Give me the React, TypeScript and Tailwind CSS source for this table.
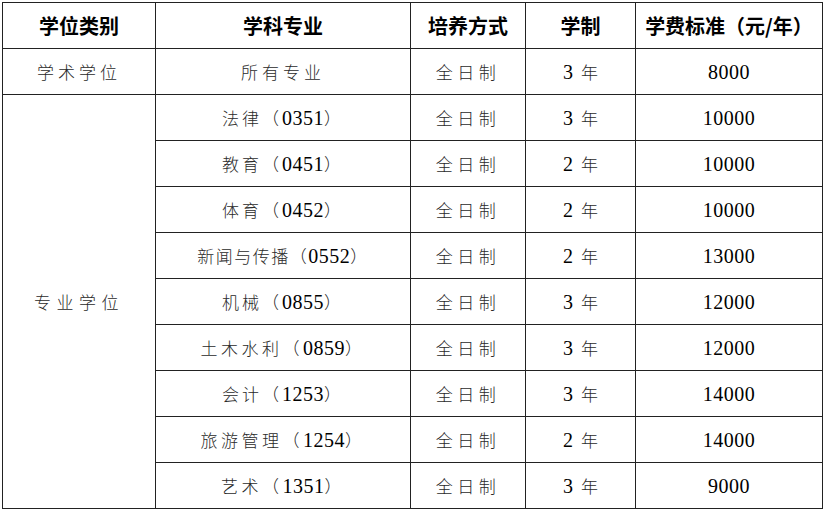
import React from "react";

type Row = { major: string; mode: string; years: string; fee: string; track?: string };

const ROWS: Row[] = [
  { major: "法律（0351）", mode: "全日制", years: "3 年", fee: "10000", track: "tracking-[3px]" },
  { major: "教育（0451）", mode: "全日制", years: "2 年", fee: "10000", track: "tracking-[3px]" },
  { major: "体育（0452）", mode: "全日制", years: "2 年", fee: "10000", track: "tracking-[3px]" },
  { major: "新闻与传播（0552）", mode: "全日制", years: "2 年", fee: "13000", track: "tracking-[1.5px]" },
  { major: "机械（0855）", mode: "全日制", years: "3 年", fee: "12000", track: "tracking-[3px]" },
  { major: "土木水利（0859）", mode: "全日制", years: "3 年", fee: "12000", track: "tracking-[3.5px]" },
  { major: "会计（1253）", mode: "全日制", years: "3 年", fee: "14000", track: "tracking-[3px]" },
  { major: "旅游管理（1254）", mode: "全日制", years: "2 年", fee: "14000", track: "tracking-[3.5px]" },
  { major: "艺术（1351）", mode: "全日制", years: "3 年", fee: "9000", track: "tracking-[3.5px]" },
];

// digits in Times-like serif, everything else in the CJK face
function Mixed({ text }: { text: string }) {
  const parts = text.split(/(\d+)/).filter(Boolean);
  return (
    <span className="whitespace-pre">
      {parts.map((p, i) =>
        /^\d+$/.test(p) ? (
          <span key={i} className="font-['Liberation_Serif',serif] text-[20px] tracking-[0.5px] text-black">
            {p}
          </span>
        ) : (
          <span key={i}>{p}</span>
        )
      )}
    </span>
  );
}

function Cell({ children, className = "" }: { children: React.ReactNode; className?: string }) {
  return (
    <div className={`flex items-center justify-center bg-white whitespace-nowrap ${className}`}>
      {children}
    </div>
  );
}

export default function App() {
  const body = "text-[17px] text-[#2a2a2a] font-['Noto_Sans_CJK_SC',sans-serif] font-light";
  const head = "text-[20px] font-bold text-black font-['Noto_Sans_CJK_SC',sans-serif]";

  return (
    <div className="w-[826px] h-[512px] bg-white pl-[2px] pt-[2px]">
      <div className="grid w-fit grid-cols-[152px_254px_114px_109px_186px] grid-rows-[repeat(11,45px)] gap-px bg-[#222] p-px">
        {/* header */}
        <Cell className={head}>学位类别</Cell>
        <Cell className={head}>学科专业</Cell>
        <Cell className={head}>培养方式</Cell>
        <Cell className={head}>学制</Cell>
        <Cell className={head}>学费标准（元/年）</Cell>

        {/* academic degree */}
        <Cell className={`${body} tracking-[4px]`}>学术学位</Cell>
        <Cell className={`${body} tracking-[4px]`}>所有专业</Cell>
        <Cell className={`${body} tracking-[4.5px]`}>全日制</Cell>
        <Cell className={body}>
          <Mixed text="3  年" />
        </Cell>
        <Cell className={body}>
          <Mixed text="8000" />
        </Cell>

        {/* professional degree */}
        <Cell className={`${body} row-span-9 tracking-[5.5px]`}>专业学位</Cell>
        {ROWS.map((r) => (
          <React.Fragment key={r.major}>
            <Cell className={`${body} ${r.track ?? ""}`}>
              <Mixed text={r.major} />
            </Cell>
            <Cell className={`${body} tracking-[4.5px]`}>{r.mode}</Cell>
            <Cell className={body}>
              <Mixed text={r.years.replace(" ", "  ")} />
            </Cell>
            <Cell className={body}>
              <Mixed text={r.fee} />
            </Cell>
          </React.Fragment>
        ))}
      </div>
    </div>
  );
}
